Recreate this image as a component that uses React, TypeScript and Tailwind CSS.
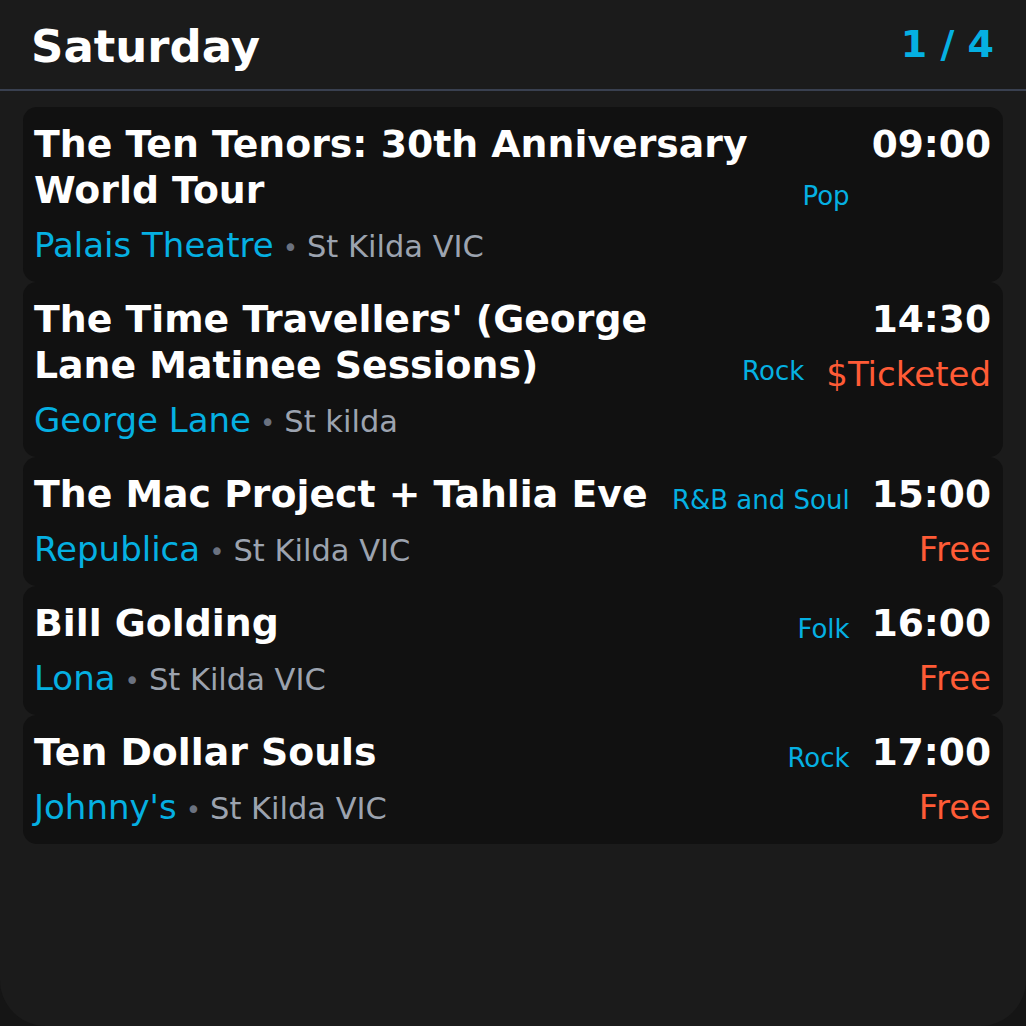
import React from 'react';

interface Gig {
  title: string;
  genre: string;
  time: string;
  venue: string;
  suburb: string;
  price?: string;
}

const gigs: Gig[] = [
  { title: 'The Ten Tenors: 30th Anniversary World Tour', genre: 'Pop', time: '09:00', venue: 'Palais Theatre', suburb: 'St Kilda VIC' },
  { title: "The Time Travellers' (George Lane Matinee Sessions)", genre: 'Rock', time: '14:30', venue: 'George Lane', suburb: 'St kilda', price: '$Ticketed' },
  { title: 'The Mac Project + Tahlia Eve', genre: 'R&B and Soul', time: '15:00', venue: 'Republica', suburb: 'St Kilda VIC', price: 'Free' },
  { title: 'Bill Golding', genre: 'Folk', time: '16:00', venue: 'Lona', suburb: 'St Kilda VIC', price: 'Free' },
  { title: 'Ten Dollar Souls', genre: 'Rock', time: '17:00', venue: "Johnny's", suburb: 'St Kilda VIC', price: 'Free' },
];

const GigCard: React.FC<{ gig: Gig }> = ({ gig }) => (
  <div className="flex gap-[22px] rounded-[14px] bg-[#111111] pl-[11px] pr-3 pt-[14px] pb-3">
    {/* Title + venue */}
    <div className="flex-1 min-w-0">
      <div className="flex items-end gap-4">
        <h2 className="flex-1 text-[37.8px] leading-[46px] font-bold text-white">{gig.title}</h2>
        <span className="text-[26px] leading-[34px] text-[#05b0e2] whitespace-nowrap">{gig.genre}</span>
      </div>
      <div className="mt-2 text-[34px] leading-[49px] whitespace-nowrap">
        <span className="text-[#05b0e2]">{gig.venue}</span>
        <span className="text-[#6b7280] text-[26px] leading-none mx-[9px]">•</span>
        <span className="text-[#9ca3af] text-[30.5px] leading-none">{gig.suburb}</span>
      </div>
    </div>

    {/* Time + price */}
    <div className="flex flex-col items-end">
      <span className="text-[37.5px] leading-[46px] font-bold text-white">{gig.time}</span>
      {gig.price && (
        <span className="mt-2 text-[34px] leading-[49px] text-[#ff5b36]">{gig.price}</span>
      )}
    </div>
  </div>
);

export default function App() {
  return (
    <div className="w-[1026px] h-[1026px] bg-[#151515] font-['DejaVu_Sans',sans-serif]">
      <div className="h-full rounded-b-[46px] bg-[#1b1b1b] overflow-hidden">
        {/* Header */}
        <div className="h-[89px] flex items-center justify-between pl-[31px] pr-8">
          <h1 className="text-[45px] font-bold text-white pt-1">Saturday</h1>
          <span className="text-[38px] font-bold text-[#05b0e2]">1 / 4</span>
        </div>
        <div className="h-[2px] bg-[#394050]" />

        {/* List */}
        <div className="flex flex-col px-[23px] pt-4">
          {gigs.map((g) => (
            <GigCard key={g.time} gig={g} />
          ))}
        </div>
      </div>
    </div>
  );
}
